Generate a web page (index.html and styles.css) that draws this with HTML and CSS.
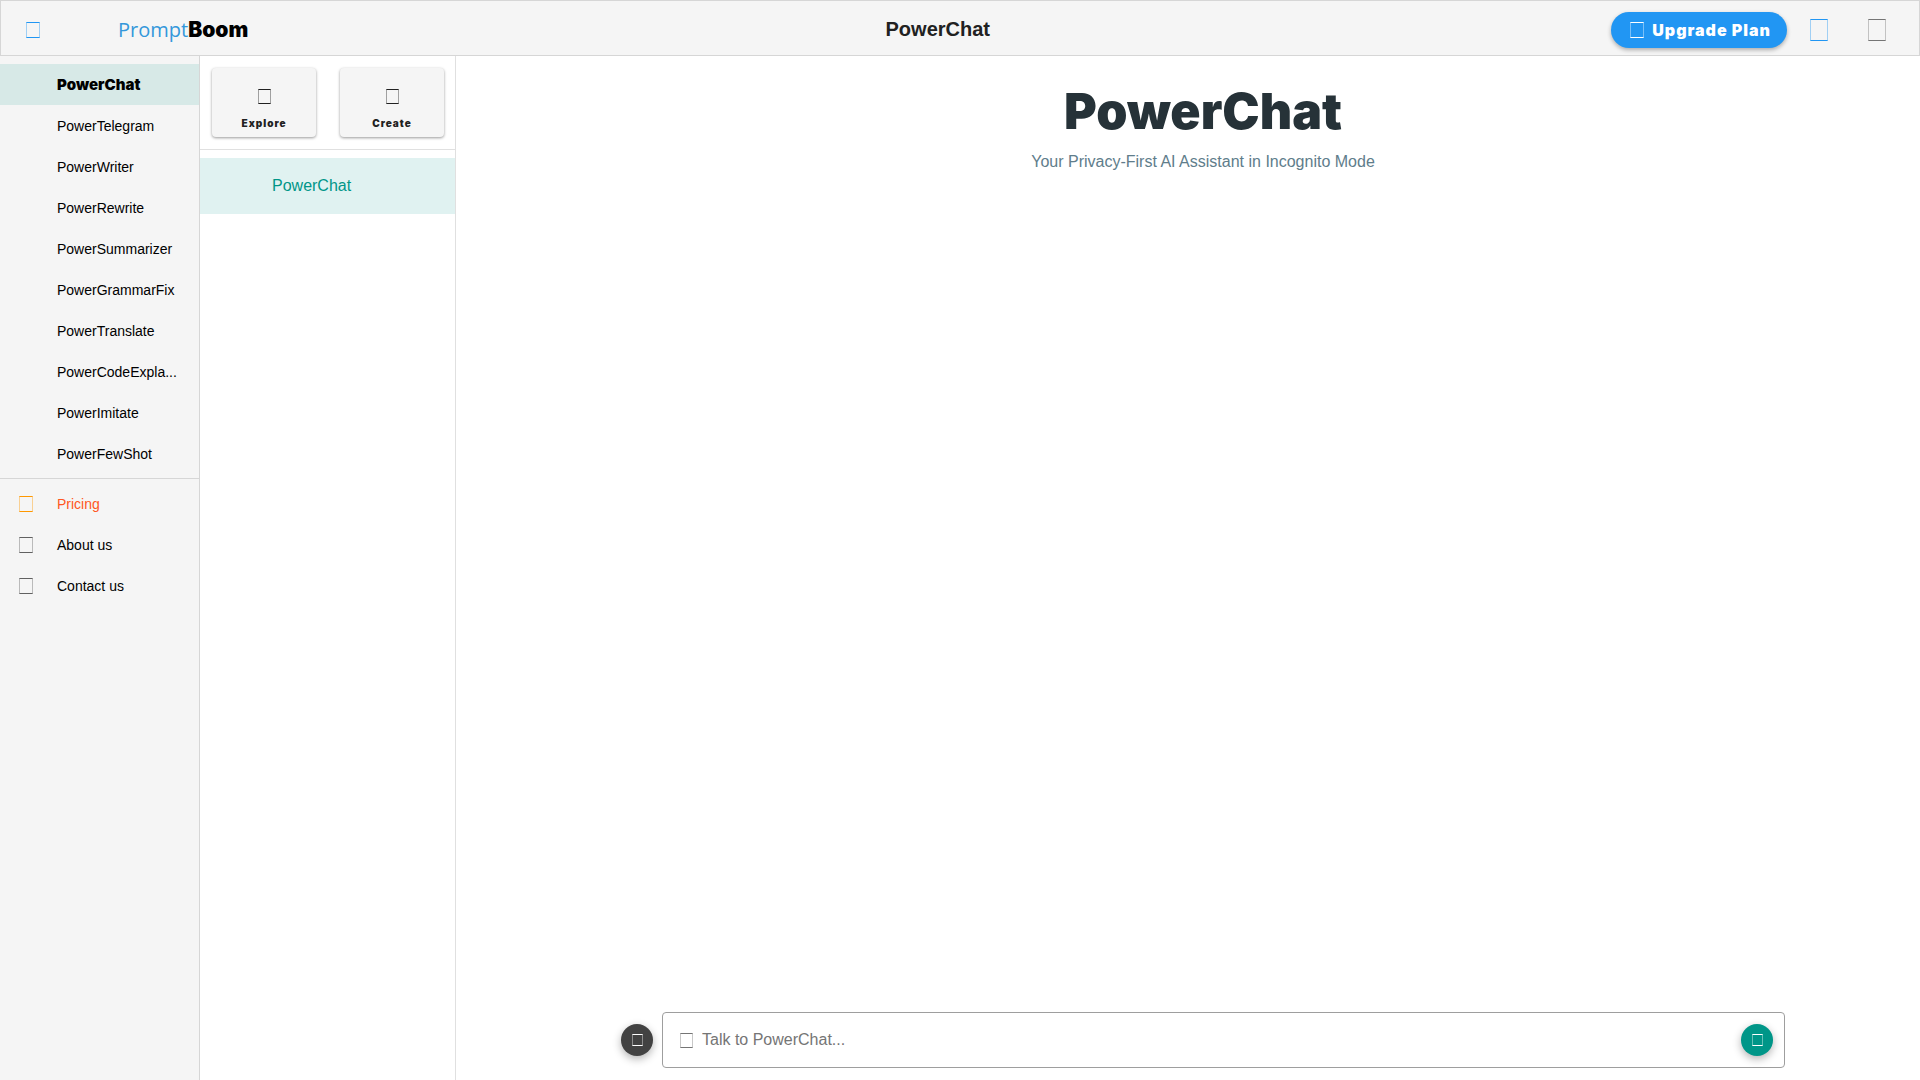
FILE: index.html
```html
<!DOCTYPE html>
<html lang="en">
<head>
  <meta charset="UTF-8" />
  <meta name="viewport" content="width=device-width, initial-scale=1" />
  <title>PowerChat</title>
  <link rel="stylesheet" href="styles.css">
</head>
<body>
  <header class="topbar">
    <button class="icon-btn menu-btn" type="button" aria-label="Menu"><span class="glyph"></span></button>
    <a class="logo" href="#"><span class="logo-prompt">Prompt</span><span class="logo-boom">Boom</span></a>
    <div class="topbar-title">PowerChat</div>
    <button class="upgrade-btn" type="button"><span class="glyph"></span>Upgrade Plan</button>
    <button class="icon-btn blue" type="button" aria-label="Language"><span class="glyph glyph-lg"></span></button>
    <button class="icon-btn gray" type="button" aria-label="Account"><span class="glyph glyph-lg"></span></button>
  </header>

  <div class="layout">
    <nav class="sidebar">
      <ul class="nav-list">
        <li><a class="nav-item active" href="#"><span class="nav-text">PowerChat</span></a></li>
        <li><a class="nav-item" href="#"><span class="nav-text">PowerTelegram</span></a></li>
        <li><a class="nav-item" href="#"><span class="nav-text">PowerWriter</span></a></li>
        <li><a class="nav-item" href="#"><span class="nav-text">PowerRewrite</span></a></li>
        <li><a class="nav-item" href="#"><span class="nav-text">PowerSummarizer</span></a></li>
        <li><a class="nav-item" href="#"><span class="nav-text">PowerGrammarFix</span></a></li>
        <li><a class="nav-item" href="#"><span class="nav-text">PowerTranslate</span></a></li>
        <li><a class="nav-item" href="#"><span class="nav-text">PowerCodeExpla...</span></a></li>
        <li><a class="nav-item" href="#"><span class="nav-text">PowerImitate</span></a></li>
        <li><a class="nav-item" href="#"><span class="nav-text">PowerFewShot</span></a></li>
      </ul>
      <ul class="nav-list nav-links">
        <li><a class="nav-item pricing" href="#"><span class="nav-icon"><span class="glyph"></span></span><span class="nav-text">Pricing</span></a></li>
        <li><a class="nav-item" href="#"><span class="nav-icon"><span class="glyph"></span></span><span class="nav-text">About us</span></a></li>
        <li><a class="nav-item" href="#"><span class="nav-icon"><span class="glyph"></span></span><span class="nav-text">Contact us</span></a></li>
      </ul>
    </nav>

    <aside class="bots">
      <div class="bots-actions">
        <button class="tile-btn" type="button"><span class="glyph glyph-md"></span>Explore</button>
        <button class="tile-btn" type="button"><span class="glyph glyph-md"></span>Create</button>
      </div>
      <a class="bot-item" href="#">PowerChat</a>
    </aside>

    <main class="chat">
      <div class="intro">
        <h1>PowerChat</h1>
        <p>Your Privacy-First AI Assistant in Incognito Mode</p>
      </div>
      <form class="composer">
        <button class="round-btn dark" type="button" aria-label="New chat"><span class="glyph glyph-sm"></span></button>
        <div class="composer-box">
          <span class="glyph glyph-md"></span>
          <input type="text" aria-label="Message" placeholder="Talk to PowerChat...">
          <button class="round-btn teal" type="submit" aria-label="Send"><span class="glyph glyph-sm"></span></button>
        </div>
      </form>
    </main>
  </div>
</body>
</html>
```
FILE: styles.css
```css
* {
  box-sizing: border-box;
}

body {
  margin: 0;
  min-height: 100vh;
  display: flex;
  flex-direction: column;
  font-family: Arial, "Liberation Sans", sans-serif;
  font-size: 16px;
  color: #000;
  background: #fff;
}

a {
  color: inherit;
  text-decoration: none;
}

button {
  border: none;
  padding: 0;
  cursor: pointer;
  color: inherit;
  background: none;
}

/* outlined box icon */
.glyph {
  flex: none;
  display: block;
  width: 14px;
  height: 16px;
  border: 1px solid currentColor;
  border-left-color: color-mix(in srgb, currentColor 40%, transparent);
  border-right-color: color-mix(in srgb, currentColor 40%, transparent);
}

.glyph-sm {
  width: 11px;
  height: 12px;
}

.glyph-md {
  width: 13px;
  height: 15px;
}

.glyph-lg {
  width: 18px;
  height: 22px;
}

.topbar {
  height: 56px;
  display: flex;
  align-items: center;
  padding: 3px 18px 0 8px;
  border: 1px solid #d6d6d6;
  background: #f5f5f5;
}

.icon-btn {
  width: 48px;
  height: 48px;
  display: flex;
  align-items: center;
  justify-content: center;
}

.icon-btn + .icon-btn {
  margin-left: 10px;
}

.menu-btn,
.blue {
  color: #2196f3;
}

.gray {
  color: #757575;
}

.logo {
  margin-left: 61px;
  display: flex;
  align-items: baseline;
  line-height: 24px;
}

.logo-prompt {
  font-family: "Comic Sans MS", "Open Sans", sans-serif;
  font-size: 20px;
  color: #3498db;
}

.logo-boom {
  font-family: Inter, sans-serif;
  font-size: 21px;
  font-weight: 900;
}

.topbar-title {
  flex: 1;
  padding: 0 8px 0 24px;
  text-align: center;
  font-size: 20px;
  font-weight: bold;
  color: #212121;
}

.upgrade-btn {
  height: 36px;
  margin-right: 8px;
  padding: 0 16px 0 19px;
  display: flex;
  align-items: center;
  gap: 8px;
  border-radius: 18px;
  font: 900 16px Inter, sans-serif;
  letter-spacing: 1px;
  color: #fff;
  background: #2196f3;
  box-shadow: 0 2px 4px rgba(0, 0, 0, 0.3);
}

.layout {
  flex: 1;
  display: flex;
}

.sidebar {
  flex: none;
  width: 200px;
  border-right: 1px solid #d6d6d6;
  background: #f5f5f5;
}

.nav-list {
  list-style: none;
  margin: 0;
  padding: 8px 0 4px;
}

.nav-links {
  padding-top: 4px;
  border-top: 1px solid #d6d6d6;
}

.nav-item {
  height: 41px;
  display: flex;
  align-items: center;
  font-size: 14px;
}

.nav-text {
  margin-left: auto;
  width: 142px;
  white-space: nowrap;
}

.nav-icon {
  padding-left: 19px;
  color: #616161;
}

.nav-item.active {
  font-family: Inter, sans-serif;
  font-size: 15px;
  font-weight: 900;
  background: #d7e9e7;
}

.pricing {
  color: #ff5722;
}

.pricing .nav-icon {
  color: #ff9800;
}

.bots {
  flex: none;
  width: 256px;
  border-right: 1px solid #e0e0e0;
}

.bots-actions {
  display: flex;
  justify-content: space-between;
  padding: 12px 11px 12px 12px;
  margin-bottom: 8px;
  border-bottom: 1px solid #e0e0e0;
}

.tile-btn {
  width: 104px;
  height: 69px;
  display: flex;
  flex-direction: column;
  align-items: center;
  justify-content: flex-end;
  gap: 13px;
  padding-bottom: 8px;
  border-radius: 4px;
  font: 900 10px/12px Inter, sans-serif;
  letter-spacing: 1px;
  color: #212121;
  background: #f5f5f5;
  box-shadow: 0 1px 3px rgba(0, 0, 0, 0.4);
}

.bot-item {
  height: 56px;
  display: flex;
  align-items: center;
  padding-left: 72px;
  color: #009688;
  background: #e0f2f1;
}

.chat {
  flex: 1;
  display: flex;
  flex-direction: column;
  align-items: center;
  justify-content: space-between;
  padding: 26px 0 12px 30px;
}

.intro {
  text-align: center;
}

.intro h1 {
  margin: 0;
  font: 900 50px/58px Inter, sans-serif;
  color: #263238;
}

.intro p {
  margin: 12px 0 0;
  line-height: 20px;
  color: #607d8b;
}

.composer {
  width: 100%;
  max-width: 1164px;
  display: flex;
  align-items: center;
  gap: 9px;
}

.composer-box {
  flex: 1;
  height: 56px;
  display: flex;
  align-items: center;
  padding: 0 11px 0 17px;
  border: 1px solid #9e9e9e;
  border-radius: 4px;
  color: #757575;
}

.composer-box input {
  flex: 1;
  height: 40px;
  padding: 0 9px;
  border: none;
  outline: none;
  font: inherit;
  color: #212121;
  background: none;
}

.composer-box input::placeholder {
  color: #757575;
}

.round-btn {
  flex: none;
  width: 32px;
  height: 32px;
  display: flex;
  align-items: center;
  justify-content: center;
  border-radius: 50%;
  color: #fff;
  box-shadow: 0 3px 8px rgba(0, 0, 0, 0.3);
}

.dark {
  background: #424242;
}

.teal {
  background: #009688;
}
```
